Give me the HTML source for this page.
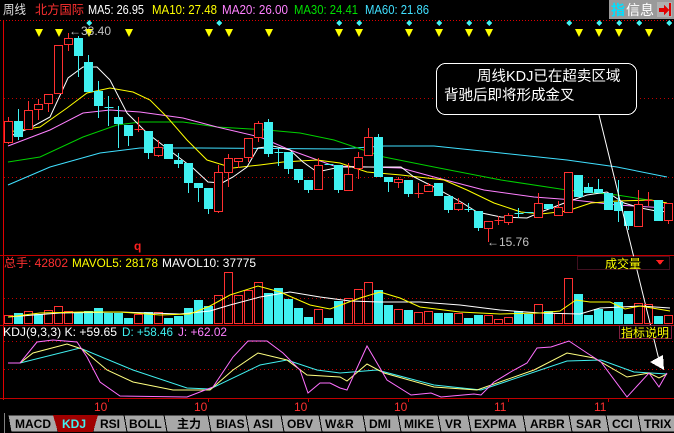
<!DOCTYPE html>
<html><head><meta charset="utf-8"><style>
body{margin:0;background:#000;width:674px;height:433px;overflow:hidden}
svg{display:block}
text{font-family:"Liberation Sans","Noto Sans CJK SC",sans-serif}
</style></head><body>
<svg width="674" height="433" viewBox="0 0 674 433" xmlns="http://www.w3.org/2000/svg" shape-rendering="crispEdges">
<rect width="674" height="433" fill="#000"/>
<!-- header -->
<g font-size="12.5" lengthAdjust="spacingAndGlyphs">
<text x="3" y="14" fill="#e0e0e0" textLength="23" lengthAdjust="spacingAndGlyphs">周线</text>
<text x="35" y="14" fill="#ff3030" textLength="49" lengthAdjust="spacingAndGlyphs">北方国际</text>
<text x="88" y="14" fill="#fff" textLength="56" lengthAdjust="spacingAndGlyphs">MA5: 26.95</text>
<text x="152" y="14" fill="#ffff00" textLength="65" lengthAdjust="spacingAndGlyphs">MA10: 27.48</text>
<text x="222" y="14" fill="#ff80ff" textLength="66" lengthAdjust="spacingAndGlyphs">MA20: 26.00</text>
<text x="294" y="14" fill="#00e000" textLength="64" lengthAdjust="spacingAndGlyphs">MA30: 24.41</text>
<text x="365" y="14" fill="#40e0ff" textLength="64" lengthAdjust="spacingAndGlyphs">MA60: 21.86</text>
</g>
<rect x="609" y="0" width="65" height="19" fill="#9a9a9a"/>
<text x="611" y="15" font-size="14" fill="#00e0ff" font-weight="bold">指</text>
<text x="626" y="15" font-size="14" fill="#fff">信息</text>
<rect x="657" y="2" width="15" height="15" fill="#b0b0b0"/>
<polygon points="659,8 664,8 664,5 669,10 664,15 664,12 659,12" fill="#e00000"/>
<rect x="669" y="3" width="2" height="13" fill="#e00000"/>
<!-- frames -->
<line x1="0" y1="20.5" x2="674" y2="20.5" stroke="#e00000" stroke-dasharray="1,2"/>
<line x1="3.5" y1="20" x2="3.5" y2="400" stroke="#e00000"/>
<line x1="0" y1="255.5" x2="674" y2="255.5" stroke="#c00000"/>
<line x1="0" y1="325.5" x2="674" y2="325.5" stroke="#c00000"/>
<line x1="0" y1="398.5" x2="674" y2="398.5" stroke="#c00000"/>
<g stroke="#c00000" stroke-dasharray="1,3">
<line x1="4" y1="98.5" x2="674" y2="98.5"/>
<line x1="4" y1="177.5" x2="674" y2="177.5"/>
<line x1="4" y1="298.5" x2="674" y2="298.5"/>
<line x1="4" y1="341.5" x2="674" y2="341.5"/>
<line x1="4" y1="369.5" x2="674" y2="369.5"/>
</g>
<!-- markers -->
<g fill="#ffff00">
<polygon points="35,29 43,29 39,37"/><polygon points="55,29 63,29 59,37"/><polygon points="85,29 93,29 89,37"/><polygon points="125,29 133,29 129,37"/><polygon points="205,29 213,29 209,37"/><polygon points="225,29 233,29 229,37"/><polygon points="265,29 273,29 269,37"/><polygon points="335,29 343,29 339,37"/><polygon points="355,29 363,29 359,37"/><polygon points="405,29 413,29 409,37"/><polygon points="435,29 443,29 439,37"/><polygon points="465,29 473,29 469,37"/><polygon points="485,29 493,29 489,37"/><polygon points="575,29 583,29 579,37"/><polygon points="595,29 603,29 599,37"/><polygon points="615,29 623,29 619,37"/><polygon points="645,29 653,29 649,37"/>
</g>
<g fill="#40f0f0">
<polygon points="89,20 92,23 89,26 86,23"/><polygon points="219,20 222,23 219,26 216,23"/><polygon points="339,20 342,23 339,26 336,23"/><polygon points="359,20 362,23 359,26 356,23"/><polygon points="409,20 412,23 409,26 406,23"/><polygon points="439,20 442,23 439,26 436,23"/><polygon points="469,20 472,23 469,26 466,23"/><polygon points="489,20 492,23 489,26 486,23"/><polygon points="569,20 572,23 569,26 566,23"/><polygon points="599,20 602,23 599,26 596,23"/><polygon points="619,20 622,23 619,26 616,23"/><polygon points="639,20 642,23 639,26 636,23"/><polygon points="669,20 672,23 669,26 666,23"/>
</g>
<!-- MA lines -->
<g fill="none" stroke-width="1" shape-rendering="auto">
<polyline stroke="#40e0ff" points="8,185 50,167 100,153 140,148 200,148 340,149 384,146 434,146 501,153 567,160 617,167 667,177"/>
<polyline stroke="#00d000" points="8,162 40,157 83,137 117,125 140,122 183,122 217,127 267,130 300,133 334,140 384,157 434,167 501,180 567,190 617,195 667,203"/>
<polyline stroke="#ff80ff" points="8,146 50,130 83,113 110,110 140,112 183,118 217,127 260,137 290,150 334,166 401,168 434,177 484,190 534,197 574,200 617,205 667,208"/>
<polyline stroke="#ffff00" points="8,132 40,127 67,108 87,93 110,88 133,92 150,100 167,117 187,140 207,160 233,168 260,165 283,162 317,160 340,163 367,172 401,175 444,180 467,190 494,203 521,212 541,214 567,211 591,203 617,201 651,200 667,203"/>
<polyline stroke="#fff" points="8,137 30,128 50,117 68,78 83,67 97,67 110,80 127,113 147,133 173,153 193,168 208,182 222,183 233,177 247,167 258,148 273,146 290,150 303,162 317,172 340,167 367,167 401,167 414,177 434,187 461,202 477,212 501,217 527,218 541,212 567,202 587,195 607,192 624,203 641,208 661,212 667,211"/>
</g>
<!-- candles -->
<g stroke="#ff3030" fill="none">
<line x1="8.5" y1="117" x2="8.5" y2="144"/><rect x="4.5" y="121.5" width="8" height="21" fill="#000"/>
<line x1="28.5" y1="101" x2="28.5" y2="110"/><rect x="24.5" y="110.5" width="8" height="19" fill="#000"/>
<line x1="38.5" y1="99" x2="38.5" y2="120"/><rect x="34.5" y="104.5" width="8" height="5" fill="#000"/>
<line x1="48.5" y1="103" x2="48.5" y2="112"/><rect x="44.5" y="94.5" width="8" height="9" fill="#000"/>
<rect x="54.5" y="45.5" width="8" height="48" fill="#000"/>
<line x1="68.5" y1="33" x2="68.5" y2="51"/><rect x="64.5" y="38.5" width="8" height="6" fill="#000"/>
<line x1="134.5" y1="129.5" x2="143.5" y2="129.5"/><line x1="138.5" y1="117" x2="138.5" y2="132"/>
<line x1="158.5" y1="140" x2="158.5" y2="157"/><rect x="154.5" y="147.5" width="8" height="8" fill="#000"/>
<line x1="218.5" y1="165" x2="218.5" y2="213"/><rect x="214.5" y="172.5" width="8" height="39" fill="#000"/>
<line x1="228.5" y1="154" x2="228.5" y2="187"/><rect x="224.5" y="158.5" width="8" height="14" fill="#000"/>
<line x1="238.5" y1="158" x2="238.5" y2="168"/><rect x="234.5" y="158.5" width="8" height="3" fill="#000"/>
<line x1="248.5" y1="138" x2="248.5" y2="162"/><rect x="244.5" y="138.5" width="8" height="19" fill="#000"/>
<line x1="258.5" y1="121" x2="258.5" y2="142"/><rect x="254.5" y="123.5" width="8" height="14" fill="#000"/>
<line x1="318.5" y1="158" x2="318.5" y2="165"/><rect x="314.5" y="165.5" width="8" height="24" fill="#000"/>
<line x1="348.5" y1="163" x2="348.5" y2="174"/><rect x="344.5" y="174.5" width="8" height="16" fill="#000"/>
<line x1="358.5" y1="152" x2="358.5" y2="179"/><rect x="354.5" y="157.5" width="8" height="11" fill="#000"/>
<line x1="368.5" y1="128" x2="368.5" y2="137"/><rect x="364.5" y="137.5" width="8" height="18" fill="#000"/>
<line x1="398.5" y1="177" x2="398.5" y2="188"/><rect x="394.5" y="179.5" width="8" height="3" fill="#000"/>
<line x1="414.5" y1="193.5" x2="423.5" y2="193.5"/><line x1="418.5" y1="183" x2="418.5" y2="198"/>
<line x1="428.5" y1="183" x2="428.5" y2="185"/><rect x="424.5" y="185.5" width="8" height="6" fill="#000"/>
<line x1="458.5" y1="198" x2="458.5" y2="211"/><rect x="454.5" y="203.5" width="8" height="6" fill="#000"/>
<line x1="488.5" y1="221" x2="488.5" y2="242"/><rect x="484.5" y="221.5" width="8" height="7" fill="#000"/>
<line x1="494.5" y1="220.5" x2="503.5" y2="220.5"/><line x1="498.5" y1="216" x2="498.5" y2="225"/>
<line x1="508.5" y1="213" x2="508.5" y2="225"/><rect x="504.5" y="215.5" width="8" height="7" fill="#000"/>
<line x1="538.5" y1="193" x2="538.5" y2="203"/><rect x="534.5" y="203.5" width="8" height="14" fill="#000"/>
<line x1="558.5" y1="201" x2="558.5" y2="207"/><rect x="554.5" y="207.5" width="8" height="8" fill="#000"/>
<rect x="564.5" y="172.5" width="8" height="40" fill="#000"/>
<line x1="638.5" y1="190" x2="638.5" y2="204"/><rect x="634.5" y="204.5" width="8" height="22" fill="#000"/>
<line x1="644.5" y1="200.5" x2="653.5" y2="200.5"/><line x1="648.5" y1="192" x2="648.5" y2="206"/>
<line x1="668.5" y1="220" x2="668.5" y2="224"/><rect x="664.5" y="203.5" width="8" height="17" fill="#000"/>
</g>
<g stroke="#40f0f0" fill="#40f0f0">
<line x1="18.5" y1="109" x2="18.5" y2="140"/><rect x="14.5" y="121.5" width="8" height="15"/>
<line x1="78.5" y1="36" x2="78.5" y2="77"/><rect x="74.5" y="38.5" width="8" height="17"/>
<line x1="88.5" y1="55" x2="88.5" y2="92"/><rect x="84.5" y="62.5" width="8" height="29"/>
<line x1="98.5" y1="81" x2="98.5" y2="118"/><rect x="94.5" y="91.5" width="8" height="14"/>
<line x1="104.5" y1="107.5" x2="113.5" y2="107.5"/><line x1="108.5" y1="96" x2="108.5" y2="126"/>
<line x1="118.5" y1="106" x2="118.5" y2="148"/><rect x="114.5" y="117.5" width="8" height="6"/>
<line x1="128.5" y1="125" x2="128.5" y2="146"/><rect x="124.5" y="125.5" width="8" height="10"/>
<line x1="148.5" y1="131" x2="148.5" y2="159"/><rect x="144.5" y="131.5" width="8" height="21"/>
<rect x="164.5" y="144.5" width="8" height="14"/>
<line x1="178.5" y1="153" x2="178.5" y2="168"/><rect x="174.5" y="160.5" width="8" height="3"/>
<line x1="188.5" y1="163" x2="188.5" y2="193"/><rect x="184.5" y="163.5" width="8" height="19"/>
<line x1="198.5" y1="183" x2="198.5" y2="202"/><rect x="194.5" y="183.5" width="8" height="4"/>
<line x1="208.5" y1="188" x2="208.5" y2="214"/><rect x="204.5" y="188.5" width="8" height="20"/>
<line x1="268.5" y1="119" x2="268.5" y2="157"/><rect x="264.5" y="122.5" width="8" height="31"/>
<line x1="274.5" y1="152.5" x2="283.5" y2="152.5"/><line x1="278.5" y1="148" x2="278.5" y2="166"/>
<line x1="288.5" y1="152" x2="288.5" y2="174"/><rect x="284.5" y="152.5" width="8" height="16"/>
<line x1="298.5" y1="169" x2="298.5" y2="183"/><rect x="294.5" y="169.5" width="8" height="10"/>
<line x1="308.5" y1="180" x2="308.5" y2="193"/><rect x="304.5" y="180.5" width="8" height="9"/>
<line x1="324.5" y1="164.5" x2="333.5" y2="164.5"/>
<line x1="338.5" y1="165" x2="338.5" y2="193"/><rect x="334.5" y="165.5" width="8" height="24"/>
<line x1="378.5" y1="134" x2="378.5" y2="177"/><rect x="374.5" y="137.5" width="8" height="39"/>
<line x1="388.5" y1="177" x2="388.5" y2="192"/><rect x="384.5" y="177.5" width="8" height="4"/>
<line x1="408.5" y1="180" x2="408.5" y2="197"/><rect x="404.5" y="180.5" width="8" height="13"/>
<line x1="438.5" y1="183" x2="438.5" y2="196"/><rect x="434.5" y="183.5" width="8" height="12"/>
<line x1="448.5" y1="196" x2="448.5" y2="213"/><rect x="444.5" y="196.5" width="8" height="13"/>
<line x1="464.5" y1="209.5" x2="473.5" y2="209.5"/><line x1="468.5" y1="203" x2="468.5" y2="212"/>
<line x1="478.5" y1="211" x2="478.5" y2="231"/><rect x="474.5" y="211.5" width="8" height="16"/>
<line x1="514.5" y1="213.5" x2="523.5" y2="213.5"/><line x1="518.5" y1="208" x2="518.5" y2="218"/>
<line x1="524.5" y1="212.5" x2="533.5" y2="212.5"/>
<rect x="544.5" y="204.5" width="8" height="4"/>
<rect x="574.5" y="175.5" width="8" height="21"/>
<line x1="588.5" y1="183" x2="588.5" y2="193"/><rect x="584.5" y="187.5" width="8" height="5"/>
<line x1="598.5" y1="179" x2="598.5" y2="192"/><rect x="594.5" y="189.5" width="8" height="3"/>
<rect x="604.5" y="193.5" width="8" height="16"/>
<line x1="618.5" y1="180" x2="618.5" y2="222"/><rect x="614.5" y="202.5" width="8" height="8"/>
<line x1="628.5" y1="211" x2="628.5" y2="230"/><rect x="624.5" y="211.5" width="8" height="14"/>
<rect x="654.5" y="200.5" width="8" height="20"/>
</g>
<text x="69" y="35" font-size="12" fill="#c0c0c0">←33.40</text>
<text x="487" y="246" font-size="12" fill="#c0c0c0">←15.76</text>
<text x="134" y="250" font-size="12" fill="#ff2020" font-weight="bold">q</text>
<!-- annotation -->
<rect x="436.5" y="63.5" width="200" height="51" rx="9" fill="#000" stroke="#fff"/>
<text x="477" y="81" font-size="14.5" fill="#fff">周线KDJ已在超卖区域</text>
<text x="444" y="100" font-size="14.5" fill="#fff">背驰后即将形成金叉</text>
<line x1="599" y1="115" x2="660" y2="364" stroke="#fff" shape-rendering="auto"/>
<polygon points="650,362 663,355 664,370" fill="#fff"/>
<!-- volume header -->
<g font-size="12">
<text x="4" y="267" fill="#ff3030" textLength="64" lengthAdjust="spacingAndGlyphs">总手: 42802</text>
<text x="72" y="267" fill="#ffff00" textLength="86" lengthAdjust="spacingAndGlyphs">MAVOL5: 28178</text>
<text x="162" y="267" fill="#fff" textLength="94" lengthAdjust="spacingAndGlyphs">MAVOL10: 37775</text>
</g>
<rect x="577.5" y="256.5" width="92" height="13" fill="#000" stroke="#802040" stroke-dasharray="1,1"/>
<text x="605" y="268" font-size="12" fill="#ffff00">成交量</text>
<polygon points="656,260 664,260 660,265" fill="#ff2020"/>
<!-- volume bars -->
<g stroke="#ff3030" fill="none">
<rect x="4.5" y="315.5" width="8" height="8"/><rect x="24.5" y="311.5" width="8" height="12"/><rect x="44.5" y="310.5" width="8" height="13"/><rect x="54.5" y="306.5" width="8" height="17"/><rect x="64.5" y="311.5" width="8" height="12"/><rect x="134.5" y="314.5" width="8" height="9"/><rect x="154.5" y="312.5" width="8" height="11"/><rect x="214.5" y="295.5" width="8" height="28"/><rect x="224.5" y="272.5" width="8" height="51"/><rect x="234.5" y="295.5" width="8" height="28"/><rect x="244.5" y="290.5" width="8" height="33"/><rect x="254.5" y="282.5" width="8" height="41"/><rect x="314.5" y="309.5" width="8" height="14"/><rect x="344.5" y="298.5" width="8" height="25"/><rect x="354.5" y="289.5" width="8" height="34"/><rect x="364.5" y="282.5" width="8" height="41"/><rect x="394.5" y="309.5" width="8" height="14"/><rect x="414.5" y="312.5" width="8" height="11"/><rect x="424.5" y="311.5" width="8" height="12"/><rect x="454.5" y="313.5" width="8" height="10"/><rect x="484.5" y="315.5" width="8" height="8"/><rect x="494.5" y="319.5" width="8" height="4"/><rect x="504.5" y="317.5" width="8" height="6"/><rect x="534.5" y="304.5" width="8" height="19"/><rect x="554.5" y="313.5" width="8" height="10"/><rect x="564.5" y="278.5" width="8" height="45"/><rect x="634.5" y="303.5" width="8" height="20"/><rect x="644.5" y="304.5" width="8" height="19"/><rect x="664.5" y="315.5" width="8" height="8"/>
</g>
<g fill="#40f0f0">
<rect x="14" y="313" width="9" height="11"/><rect x="34" y="314" width="9" height="10"/><rect x="74" y="313" width="9" height="11"/><rect x="84" y="311" width="9" height="13"/><rect x="94" y="308" width="9" height="16"/><rect x="104" y="313" width="9" height="11"/><rect x="114" y="313" width="9" height="11"/><rect x="124" y="318" width="9" height="6"/><rect x="144" y="312" width="9" height="12"/><rect x="164" y="318" width="9" height="6"/><rect x="174" y="316" width="9" height="8"/><rect x="184" y="308" width="9" height="16"/><rect x="194" y="300" width="9" height="24"/><rect x="204" y="306" width="9" height="18"/><rect x="264" y="293" width="9" height="31"/><rect x="274" y="288" width="9" height="36"/><rect x="284" y="299" width="9" height="25"/><rect x="294" y="308" width="9" height="16"/><rect x="304" y="317" width="9" height="7"/><rect x="324" y="318" width="9" height="6"/><rect x="334" y="301" width="9" height="23"/><rect x="374" y="290" width="9" height="34"/><rect x="384" y="305" width="9" height="19"/><rect x="404" y="310" width="9" height="14"/><rect x="434" y="313" width="9" height="11"/><rect x="444" y="313" width="9" height="11"/><rect x="464" y="318" width="9" height="6"/><rect x="474" y="315" width="9" height="9"/><rect x="514" y="311" width="9" height="13"/><rect x="524" y="314" width="9" height="10"/><rect x="544" y="311" width="9" height="13"/><rect x="574" y="294" width="9" height="30"/><rect x="584" y="315" width="9" height="9"/><rect x="594" y="309" width="9" height="15"/><rect x="604" y="311" width="9" height="13"/><rect x="614" y="302" width="9" height="22"/><rect x="624" y="314" width="9" height="10"/><rect x="654" y="316" width="9" height="8"/>
</g>
<g fill="none" shape-rendering="auto">
<polyline stroke="#fff" points="8,317 60,313 120,312 180,314 210,311 230,305 260,297 290,292 320,297 350,301 380,302 420,302 460,305 500,310 540,313 580,314 600,308 640,306 670,308"/>
<polyline stroke="#ffff00" points="8,317 40,313 80,312 120,312 160,315 190,314 210,306 230,295 258,286 280,292 310,305 330,309 360,298 380,292 400,298 420,307 460,312 500,314 540,313 560,311 576,300 590,302 610,302 625,309 640,306 670,311"/>
</g>
<!-- KDJ header -->
<g font-size="12">
<text x="3" y="336" fill="#fff" textLength="114" lengthAdjust="spacingAndGlyphs">KDJ(9,3,3) K: +59.65</text>
<text x="122" y="336" fill="#40f0f0" textLength="51" lengthAdjust="spacingAndGlyphs">D: +58.46</text>
<text x="178" y="336" fill="#ff80ff" textLength="49" lengthAdjust="spacingAndGlyphs">J: +62.02</text>
</g>
<rect x="619.5" y="325.5" width="52" height="13" fill="#000" stroke="#802040"/>
<text x="621" y="337" font-size="12" fill="#ffff00">指标说明</text>
<g fill="none" shape-rendering="auto">
<polyline stroke="#40f0f0" points="8,363 20,363 80,348 133,370 187,388 210,389 260,365 287,360 317,370 340,373 377,370 434,385 481,390 567,361 601,360 634,372 667,374"/>
<polyline stroke="#ffff80" points="8,363 20,363 33,353 67,344 82,349 107,370 133,382 173,390 210,390 233,370 258,353 287,360 307,375 340,377 347,381 367,364 384,373 434,387 477,390 534,370 567,353 594,358 627,377 649,373 659,378 667,374"/>
<polyline stroke="#ff70ff" points="8,363 20,363 37,342 53,340 77,342 87,357 100,382 120,396 187,397 200,392 213,387 233,357 248,341 267,341 283,353 300,370 308,393 320,383 330,383 340,388 347,390 367,346 387,380 411,395 431,393 441,397 474,394 481,395 494,382 514,370 527,363 537,348 551,347 569,341 587,353 601,362 627,397 649,373 659,387 667,373"/>
</g>
<!-- dates -->
<g stroke="#c00000"><line x1="108.5" y1="398" x2="108.5" y2="402"/><line x1="208.5" y1="398" x2="208.5" y2="402"/><line x1="308.5" y1="398" x2="308.5" y2="402"/><line x1="408.5" y1="398" x2="408.5" y2="402"/><line x1="508.5" y1="398" x2="508.5" y2="402"/><line x1="608.5" y1="398" x2="608.5" y2="402"/></g>
<g font-size="12" fill="#ff3030">
<text x="94" y="411">10</text><text x="194" y="411">10</text><text x="294" y="411">10</text><text x="394" y="411">10</text><text x="494" y="411">11</text><text x="594" y="411">11</text>
</g>
<!-- tabs -->
<rect x="0" y="413" width="674" height="20" fill="#000"/>
<line x1="4.5" y1="413" x2="4.5" y2="433" stroke="#808080"/>
<g fill="#a8a8a8" stroke="#000" stroke-width="1">
<polygon points="8,415 55,415 58,432 11,432"/>
<polygon points="96,415 124,415 127,432 93,432"/>
<polygon points="124,415 164,415 167,432 127,432"/>
<polygon points="164,415 208,415 211,432 167,432"/>
<polygon points="208,415 246,415 249,432 211,432"/>
<polygon points="246,415 281,415 284,432 249,432"/>
<polygon points="281,415 319,415 322,432 284,432"/>
<polygon points="319,415 363,415 366,432 322,432"/>
<polygon points="363,415 398,415 401,432 366,432"/>
<polygon points="398,415 438,415 441,432 401,432"/>
<polygon points="438,415 468,415 471,432 441,432"/>
<polygon points="468,415 523,415 526,432 471,432"/>
<polygon points="523,415 569,415 572,432 526,432"/>
<polygon points="569,415 606,415 609,432 572,432"/>
<polygon points="606,415 638,415 641,432 609,432"/>
<polygon points="638,415 676,415 679,432 641,432"/>
</g>
<polygon points="53,415 98,415 93,432 58,432" fill="#a00000"/>
<g font-size="12" font-weight="bold" fill="#000">
<text x="15" y="428">MACD</text>
<text x="62" y="428" fill="#40f0f0">KDJ</text>
<text x="100" y="428">RSI</text>
<text x="129" y="428">BOLL</text>
<text x="177" y="428">主力</text>
<text x="216" y="428">BIAS</text>
<text x="253" y="428">ASI</text>
<text x="287" y="428">OBV</text>
<text x="325" y="428">W&amp;R</text>
<text x="369" y="428">DMI</text>
<text x="404" y="428">MIKE</text>
<text x="445" y="428">VR</text>
<text x="474" y="428">EXPMA</text>
<text x="530" y="428">ARBR</text>
<text x="576" y="428">SAR</text>
<text x="612" y="428">CCI</text>
<text x="644" y="428">TRIX</text>
</g>
</svg>
</body></html>
